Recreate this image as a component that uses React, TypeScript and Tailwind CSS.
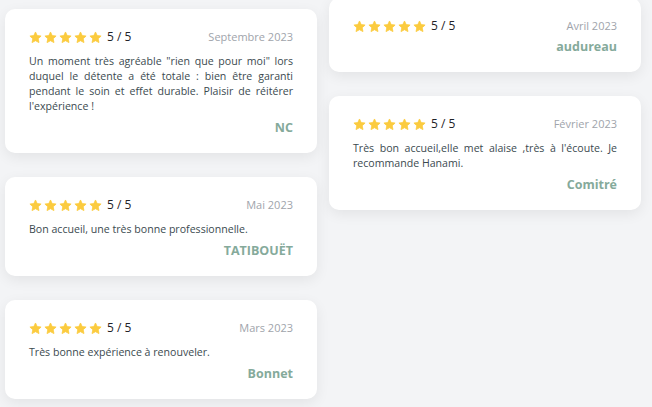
type Review = {
  date: string;
  text?: string;
  name: string;
};

const left: Review[] = [
  {
    date: "Septembre 2023",
    text: "Un moment très agréable \"rien que pour moi\" lors duquel le détente a été totale : bien être garanti pendant le soin et effet durable. Plaisir de réitérer l'expérience !",
    name: "NC",
  },
  { date: "Mai 2023", text: "Bon accueil, une très bonne professionnelle.", name: "TATIBOUËT" },
  { date: "Mars 2023", text: "Très bonne expérience à renouveler.", name: "Bonnet" },
];

const right: Review[] = [
  { date: "Avril 2023", name: "audureau" },
  {
    date: "Février 2023",
    text: "Très bon accueil,elle met alaise ,très à l'écoute. Je recommande Hanami.",
    name: "Comitré",
  },
];

function Star() {
  return (
    <svg width="13" height="13" viewBox="0 0 24 24" className="shrink-0">
      <path
        d="M12 1.8l3.1 6.6 7.2.9-5.3 5 1.4 7.1L12 17.9l-6.4 3.5 1.4-7.1-5.3-5 7.2-.9z"
        fill="#fbcb3f"
        stroke="#fbcb3f"
        strokeWidth="1.5"
        strokeLinejoin="round"
      />
    </svg>
  );
}

function Card({ r }: { r: Review }) {
  return (
    <div className="bg-white rounded-[10px] shadow-[0_4px_14px_rgba(0,0,0,0.07)] px-6 pt-[21px] pb-[17px]">
      <div className="flex items-center justify-between h-[14px]">
        <div className="flex items-center">
          <div className="flex gap-[2px]">
            <Star />
            <Star />
            <Star />
            <Star />
            <Star />
          </div>
          <span className="ml-[5px] text-[12px] text-[#1f2328]">5 / 5</span>
        </div>
        <span className="text-[11px] text-[#a0a4ab]">{r.date}</span>
      </div>
      {r.text ? (
        <p className="mt-[10px] text-[10.6px] leading-[15px] text-[#3b4a4f] text-justify">{r.text}</p>
      ) : null}
      <div className={`${r.text ? "mt-[6px]" : "mt-[6px]"} text-right text-[12.5px] leading-[16px] font-bold text-[#85aa9b]`}>
        {r.name}
      </div>
    </div>
  );
}

export default function App() {
  return (
    <div
      className="w-[652px] h-[407px] overflow-hidden bg-[#f3f4f6] flex gap-3 pl-[5px]"
      style={{ fontFamily: '"Open Sans", "Noto Sans", sans-serif' }}
    >
      <div className="w-[312px] pt-[9px] flex flex-col gap-6">
        {left.map((r) => (
          <Card key={r.date} r={r} />
        ))}
      </div>
      <div className="w-[312px] -mt-[2px] flex flex-col gap-6">
        {right.map((r) => (
          <Card key={r.date} r={r} />
        ))}
      </div>
    </div>
  );
}
